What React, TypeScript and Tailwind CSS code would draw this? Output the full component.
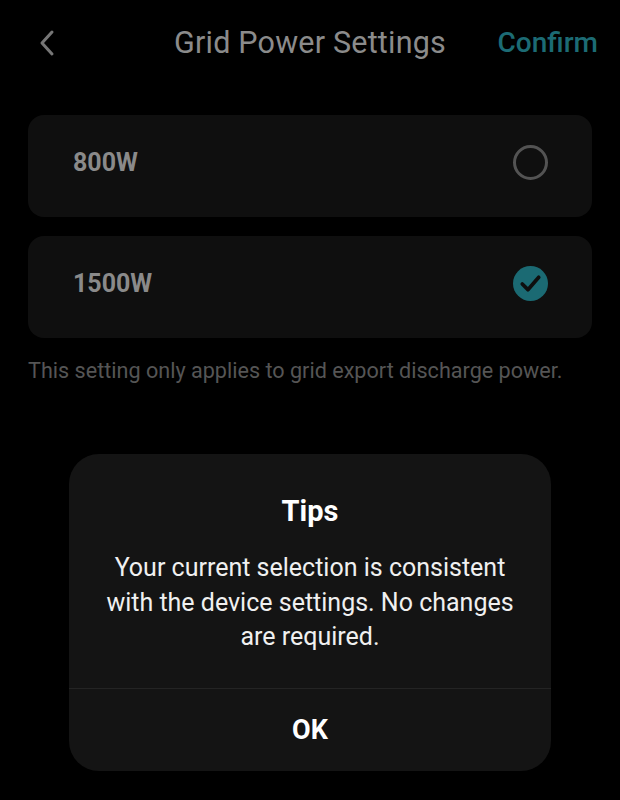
const options = [
  { label: '800W', selected: false },
  { label: '1500W', selected: true },
];

function Radio({ selected }: { selected: boolean }) {
  if (selected) {
    return (
      <svg width="35" height="35" viewBox="0 0 34 34">
        <circle cx="17" cy="17" r="17" fill="#1b6a73" />
        <path d="M9 17.5l5.5 5.5 10.5-12" fill="none" stroke="#0e0e0e" strokeWidth="3.6" strokeLinecap="round" strokeLinejoin="round" />
      </svg>
    );
  }
  return <div className="w-[35px] h-[35px] rounded-full border-[3px] border-[#535353]" />;
}

export default function App() {
  return (
    <main
      className="relative w-[620px] h-[800px] overflow-hidden bg-black"
      style={{ fontFamily: 'Roboto, "Noto Sans", sans-serif' }}
    >
      {/* Header */}
      <div className="relative flex items-center h-[86px] px-[38px]">
        <svg width="18" height="28" viewBox="0 0 18 28">
          <path d="M14 3L4 14l10 11" fill="none" stroke="#767676" strokeWidth="3" strokeLinecap="round" strokeLinejoin="round" />
        </svg>
        <h1 className="absolute left-0 right-0 text-center text-[30.5px] tracking-[0.2px] text-[#8b8b8b] pointer-events-none">
          Grid Power Settings
        </h1>
        <button className="ml-auto -mr-[16px] text-[28px] font-medium text-[#1c6b74]">Confirm</button>
      </div>

      {/* Options */}
      <div className="px-[28px] pt-[29px] flex flex-col gap-[19px]">
        {options.map((o) => (
          <div
            key={o.label}
            className="h-[102px] rounded-[16px] bg-[#0f0f0f] flex items-center justify-between pl-[45px] pr-[44px] pb-[7px]"
          >
            <span className="text-[25px] font-bold text-[#8a8a8a]">{o.label}</span>
            <Radio selected={o.selected} />
          </div>
        ))}
      </div>
      <p className="px-[28px] mt-[17px] text-[21.6px] text-[#555555]">
        This setting only applies to grid export discharge power.
      </p>

      {/* Dialog */}
      <div className="absolute left-[69px] top-[454px] w-[482px] h-[317px] rounded-[30px] bg-[#141414] flex flex-col">
        <h2 className="pt-[37px] text-center text-[29px] leading-[40px] font-bold text-white">Tips</h2>
        <p className="mt-[20px] px-[34px] text-center text-[25px] leading-[34.5px] text-[#f0f0f0]">
          Your current selection is consistent with the device settings. No changes are required.
        </p>
        <div className="mt-auto border-t border-[#242424] h-[83px] flex items-center justify-center">
          <span className="text-[27px] font-bold text-white">OK</span>
        </div>
      </div>
    </main>
  );
}
